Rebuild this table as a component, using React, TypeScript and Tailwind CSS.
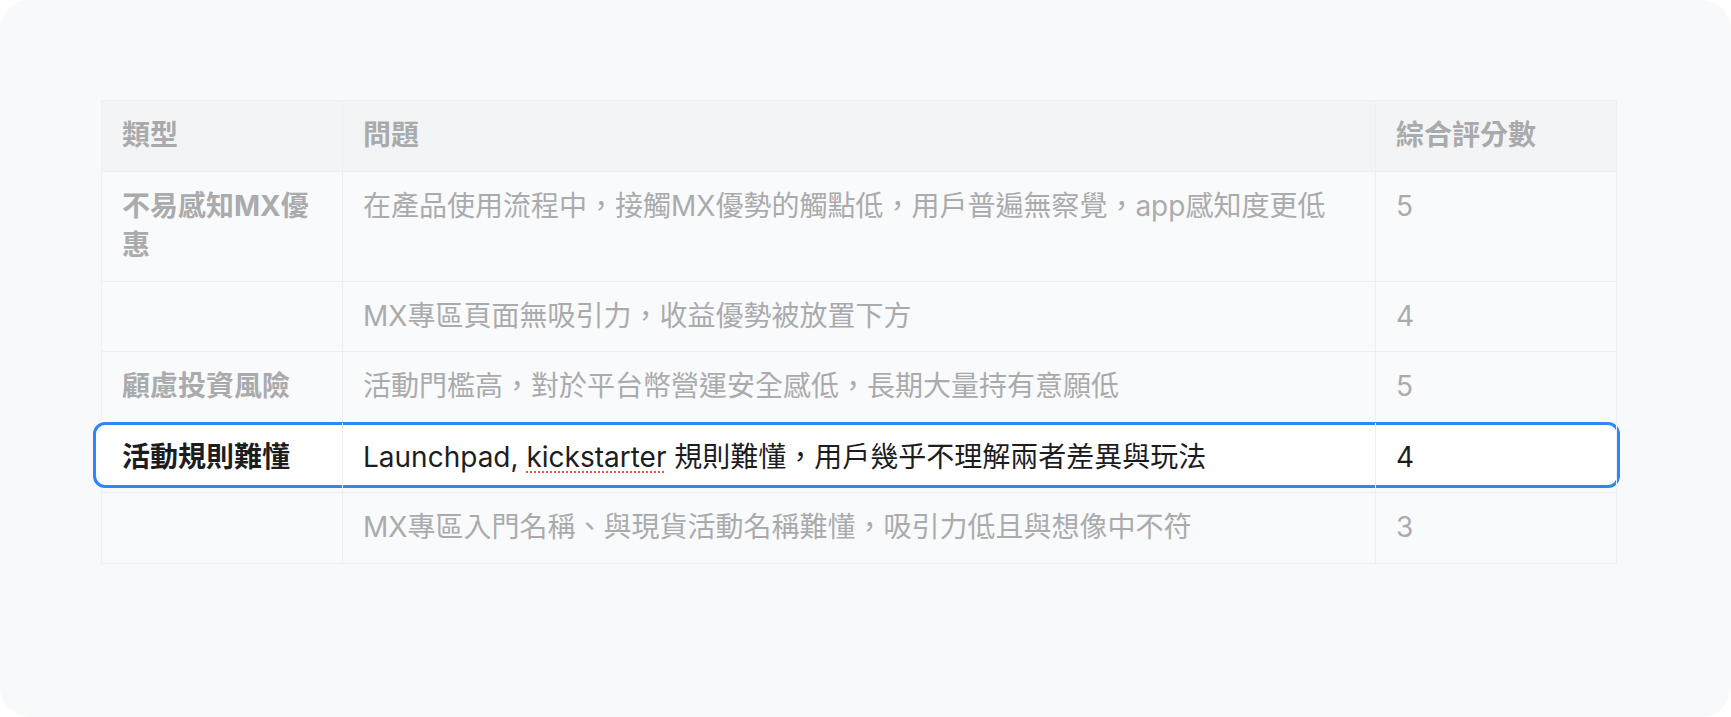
type Row = {
  type: string;
  issue: React.ReactNode;
  score: string;
  active?: boolean;
};

const rows: Row[] = [
  {
    type: "不易感知MX優惠",
    issue: "在產品使用流程中，接觸MX優勢的觸點低，用戶普遍無察覺，app感知度更低",
    score: "5",
  },
  { type: "", issue: "MX專區頁面無吸引力，收益優勢被放置下方", score: "4" },
  { type: "顧慮投資風險", issue: "活動門檻高，對於平台幣營運安全感低，長期大量持有意願低", score: "5" },
  {
    type: "活動規則難懂",
    issue: (
      <>
        Launchpad,{" "}
        <span className="underline decoration-dotted decoration-[#e5534b] decoration-2 underline-offset-[5px]">
          kickstarter
        </span>{" "}
        規則難懂，用戶幾乎不理解兩者差異與玩法
      </>
    ),
    score: "4",
    active: true,
  },
  { type: "", issue: "MX專區入門名稱、與現貨活動名稱難懂，吸引力低且與想像中不符", score: "3" },
];

const cols = "grid grid-cols-[241px_1033px_241px]";
const cell = "px-[20px] py-[15px] border-r border-b border-[#eeeff1]";

function TableRow({ row }: { row: Row }) {
  const tone = row.active ? "text-[#1d1d1f]" : "text-[#aaabad]";
  const bg = row.active ? "" : "bg-[#f9fafb]";
  return (
    <div className={`relative ${cols}`}>
      {row.active && (
        <div className="absolute -left-[9px] -right-[3px] -top-[1px] bottom-[5px] rounded-[12px] border-[3px] border-[#2f86f6] bg-white" />
      )}
      <div className={`relative ${cell} ${tone} ${bg} font-bold`}>{row.type}</div>
      <div className={`relative ${cell} ${tone} ${bg}`}>{row.issue}</div>
      <div className={`relative ${cell} ${tone} ${bg}`}>{row.score}</div>
    </div>
  );
}

export default function App() {
  return (
    <div className="bg-white">
      <div
        className="h-[717px] w-[1731px] rounded-[30px] bg-[#f8f9fa] pl-[101px] pt-[100px] text-[28px] leading-[39.5px]"
        style={{ fontFamily: 'Inter, "Noto Sans CJK TC", sans-serif' }}
      >
        <div className="w-[1516px] border-l border-t border-[#eeeff1]">
          <div className={`${cols} font-bold text-[#a9aaac]`}>
            <div className={`${cell} bg-[#f3f4f5]`}>類型</div>
            <div className={`${cell} bg-[#f3f4f5]`}>問題</div>
            <div className={`${cell} bg-[#f3f4f5]`}>綜合評分數</div>
          </div>
          {rows.map((r, i) => (
            <TableRow key={i} row={r} />
          ))}
        </div>
      </div>
    </div>
  );
}
